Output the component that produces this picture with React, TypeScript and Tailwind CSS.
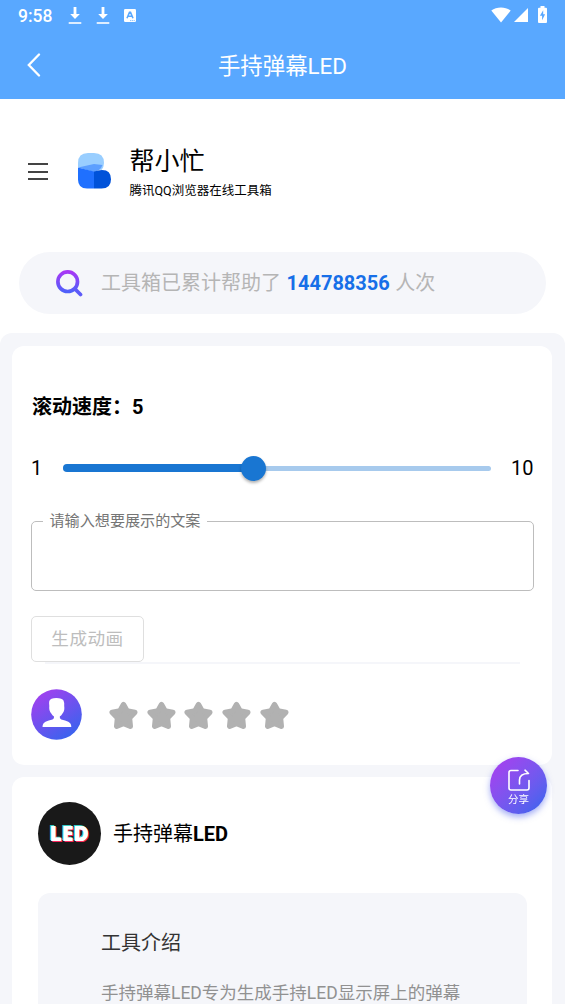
import { useState } from "react";

const stars = [1, 2, 3, 4, 5];

const DownloadIcon = () => (
  <svg width="14" height="18" viewBox="0 0 14 18" fill="#fff">
    <path d="M5.6 0h2.8v7h3.5L7 12 2.2 7h3.4z" />
    <path d="M.7 15.2h12.6v1.6H.7z" />
  </svg>
);

const StatusBar = () => (
  <div className="flex h-8 items-center pl-[18px] pr-[18px] text-white">
    <div className="w-[50px] text-[17.5px] font-medium leading-8">9:58</div>
    <div className="flex items-center gap-[14px]">
      <DownloadIcon />
      <DownloadIcon />
      <svg width="12" height="13" viewBox="0 0 12 13" className="-mt-px">
        <rect width="12" height="13" rx="1.2" fill="#fff" />
        <path
          d="M3 9.2 5.5 3.2h1L9 9.200M4.2 7.300h3.600"
          stroke="#59a8ff"
          strokeWidth="1.600"
          fill="none"
        />
        <path d="M6 11.600h5" stroke="#59a8ff" strokeWidth="0.7" strokeDasharray="1.2 .6" />
      </svg>
    </div>
    <div className="-mt-[3px] ml-auto flex items-center">
      <svg width="20" height="16" viewBox="0 0 20 16" fill="#fff">
        <path d="M10 15.500.3 3.600C3 1.500 6.300.5 10 .5s7 1 9.700 3.100z" />
      </svg>
      <svg width="14" height="14" viewBox="0 0 14 14" fill="#fff" className="ml-[3px]">
        <path d="M14 0v14H0z" />
      </svg>
      <svg width="9" height="17" viewBox="0 0 9 17" className="ml-[10px]">
        <path
          d="M2.500 0h4v1.700H8q1 0 1 1V16q0 1-1 1H1q-1 0-1-1V2.700q0-1 1-1h1.500z"
          fill="#fff"
        />
        <path d="M5.200 4.200 1.900 9.800h2.200v4.400l3-5.900H5.200z" fill="#59a8ff" />
      </svg>
    </div>
  </div>
);

const Logo = () => (
  <svg width="33" height="36" viewBox="0 0 33 36">
    <path d="M0 14V10Q0 0 10 0h6q10 0 10 10 0 4-2.500 7L0 14z" fill="#99ceff" />
    <path d="M0 14.500 16 11l8.500 1q-1 3-3.500 5l-5 2z" fill="#5c9fff" />
    <path d="M0 14.500 16 18.500V35.500H9q-9 0-9-9z" fill="#1f70ff" />
    <path d="M16 18.500q4-1.500 8-1.500 9 0 9 9.200 0 9.300-9.500 9.300H16z" fill="#0052d9" />
  </svg>
);

const Star = () => (
  <svg width="29" height="29" viewBox="0 0 29 29">
    <path
      d="M14.500 3.500 18 9.800l7.800 1.500-5.300 5.700.8 8.200-6.800-2.600-6.800 2.600.8-8.200-5.300-5.700L11 9.800z"
      fill="#b1b1b1"
      stroke="#b1b1b1"
      strokeWidth="5.400"
      strokeLinejoin="round"
    />
  </svg>
);

const ShareButton = () => (
  <button className="fixed left-[490px] top-[757px] flex size-[57px] flex-col items-center rounded-full bg-linear-to-br from-[#a340ef] from-10% to-[#4163ee] to-90% pt-3 shadow-[0_3px_6px_rgba(75,95,235,0.5)]">
    <svg
      width="22"
      height="22"
      viewBox="0 0 22 22"
      fill="none"
      stroke="#fff"
      strokeWidth="1.600"
      strokeLinecap="round"
      strokeLinejoin="round"
    >
      <path d="M10 1.500H3q-2 0-2 2V19q0 2 2 2h16q2 0 2-2v-7.500" />
      <path d="M11.500 15v-4q0-6.500 9-6.500L17 1.200" />
    </svg>
    <span className="mt-[3px] text-[10.5px] leading-3 text-white">分享</span>
  </button>
);

export default function App() {
  const [speed] = useState(5);

  return (
    <div className="h-[1004px] w-[565px] overflow-hidden bg-white font-['Roboto','Noto_Sans_CJK_SC',sans-serif] text-black">
      <header className="h-[99px] bg-[#59a8ff]">
        <StatusBar />
        <div className="flex h-[66px] items-center px-[27px] text-white">
          <svg
            width="14"
            height="24"
            viewBox="0 0 14 24"
            fill="none"
            stroke="#fff"
            strokeWidth="2.300"
            strokeLinecap="round"
          >
            <path d="M12 1.500 1.800 12 12 22.500" />
          </svg>
          <h1 className="flex-1 pr-[14px] pt-1 text-center text-[22.4px]">手持弹幕LED</h1>
        </div>
      </header>

      <div className="flex h-[153px] items-start pl-[28px] pt-[46px]">
        <div className="mt-[18px] flex w-5 flex-col gap-[5.5px]">
          <div className="h-[2px] bg-[#444]" />
          <div className="h-[2px] bg-[#444]" />
          <div className="h-[2px] bg-[#444]" />
        </div>
        <div className="ml-[30px] mt-[8px]">
          <Logo />
        </div>
        <div className="ml-[18.5px]">
          <div className="text-[25px] leading-[34px]">帮小忙</div>
          <div className="mt-[3px] text-[12.5px] leading-[18px]">腾讯QQ浏览器在线工具箱</div>
        </div>
      </div>

      <div className="ml-[19px] flex h-[62px] w-[527px] items-center rounded-full bg-[#f5f6fa] pl-[37px] text-[20px] text-[#b5b5b5]">
        <svg width="27" height="27" viewBox="0 0 27 27" fill="none" strokeLinecap="round">
          <defs>
            <linearGradient id="search" x1="0" y1="0" x2="0" y2="1">
              <stop offset="0" stopColor="#a737f5" />
              <stop offset="1" stopColor="#4f60fa" />
            </linearGradient>
          </defs>
          <circle cx="11.700" cy="11.700" r="9.800" stroke="url(#search)" strokeWidth="3.700" />
          <path d="m19 19 5.500 5.500" stroke="#5d5af8" strokeWidth="3.700" />
        </svg>
        <div className="ml-[18px] flex">
          <span>工具箱已累计帮助了</span>
          <span className="mx-[5.5px] font-bold text-[#176fe8]">144788356</span>
          <span>人次</span>
        </div>
      </div>

      <main className="mt-[19px] h-[671px] rounded-t-xl bg-[#f5f6fa] pl-3 pr-[13px] pt-[13px]">
        <section className="h-[419px] rounded-xl bg-white pl-[19px] pr-[18px] pt-[46px]">
          <div className="pl-px text-[20px] font-bold leading-[30px]">滚动速度：{speed}</div>

          <div className="mt-[31px] flex h-[30px] items-center text-[20px]">
            <span className="w-[32px]">1</span>
            <div className="relative flex h-[7px] w-[428px] items-center">
              <div className="h-[5px] w-full rounded-full bg-[#a7caed]" />
              <div
                className="absolute left-0 h-[8px] rounded-full bg-[#1976d2]"
                style={{ width: ((speed - 1) / 9) * 100 + "%" }}
              />
              <div
                className="absolute -ml-[12.7px] size-[25px] rounded-full bg-[#1976d2] shadow-[0_2px_3px_rgba(0,0,0,0.3)]"
                style={{ left: ((speed - 1) / 9) * 100 + "%" }}
              />
            </div>
            <span className="ml-5">10</span>
          </div>

          <fieldset className="mt-[27px] h-[81px] w-[503px] rounded-[5px] border border-[#bdbdbd] px-[11px]">
            <legend className="pl-[6.5px] pr-[7px] text-[15.1px] leading-[22px] text-[#757575]">
              请输入想要展示的文案
            </legend>
          </fieldset>

          <div className="mt-[25px] flex h-[46px] w-[113px] items-center justify-center rounded-[5px] border-[1.5px] border-[#dfdfdf] text-[17.6px] tracking-[0.5px] text-[#bdbdbd]">
            生成动画
          </div>
          <div className="ml-[14px] h-[2px] w-[475px] bg-[#f5f6fa]" />

          <div className="mt-[25px] flex items-center">
            <svg width="51" height="51" viewBox="0 0 51 51">
              <defs>
                <linearGradient id="user" x1="0.15" y1="0.05" x2="0.8" y2="1">
                  <stop offset="0" stopColor="#a340ef" />
                  <stop offset="1" stopColor="#3465ee" />
                </linearGradient>
              </defs>
              <circle cx="25.500" cy="25.500" r="25.300" fill="url(#user)" />
              <path
                d="M18.300 12q1-3 7-3t7.200 2.500q1 2 .7 5.500.8 5-1.700 7.500-1 2-2.700 3-.5 2 1.500 3 4 .8 7 2.200 3 1.500 3 5.300H11.500q0-3.800 3-5.300 3-1.400 7-2.200 2-1 1.500-3-1.700-1-2.700-3-2.600-2.500-2-7.500-.5-3 0-5z"
                fill="#fff"
              />
            </svg>
            <div className="ml-[27px] flex gap-[8.7px] pt-[2px]">
              {stars.map((s) => (
                <Star key={s} />
              ))}
            </div>
          </div>
        </section>

        <section className="mt-3 h-[240px] rounded-t-xl bg-white pl-[26px] pr-[25px] pt-[25px]">
          <div className="flex items-center">
            <div className="flex size-[63px] items-center justify-center rounded-full bg-[#191919] pr-px font-['Open_Sans','Noto_Sans_CJK_SC',sans-serif] text-[21px] font-extrabold text-white [text-shadow:0.4px_0_0_#fff,1.2px_0.8px_0_#f8285d,-1px_-0.8px_0_#35cbc2]">
              LED
            </div>
            <div className="ml-[12px] pt-px text-[20px]">
              手持弹幕<b>LED</b>
            </div>
          </div>

          <div className="mt-[28px] h-[200px] rounded-t-xl bg-[#f5f6fa] pl-[63px] pt-[35px]">
            <div className="text-[20px] leading-[30px] text-[#333]">工具介绍</div>
            <p className="mt-[22px] text-[17.5px] leading-[26px] text-[#919191]">
              手持弹幕LED专为生成手持LED显示屏上的弹幕
            </p>
          </div>
        </section>
      </main>

      <ShareButton />
    </div>
  );
}
